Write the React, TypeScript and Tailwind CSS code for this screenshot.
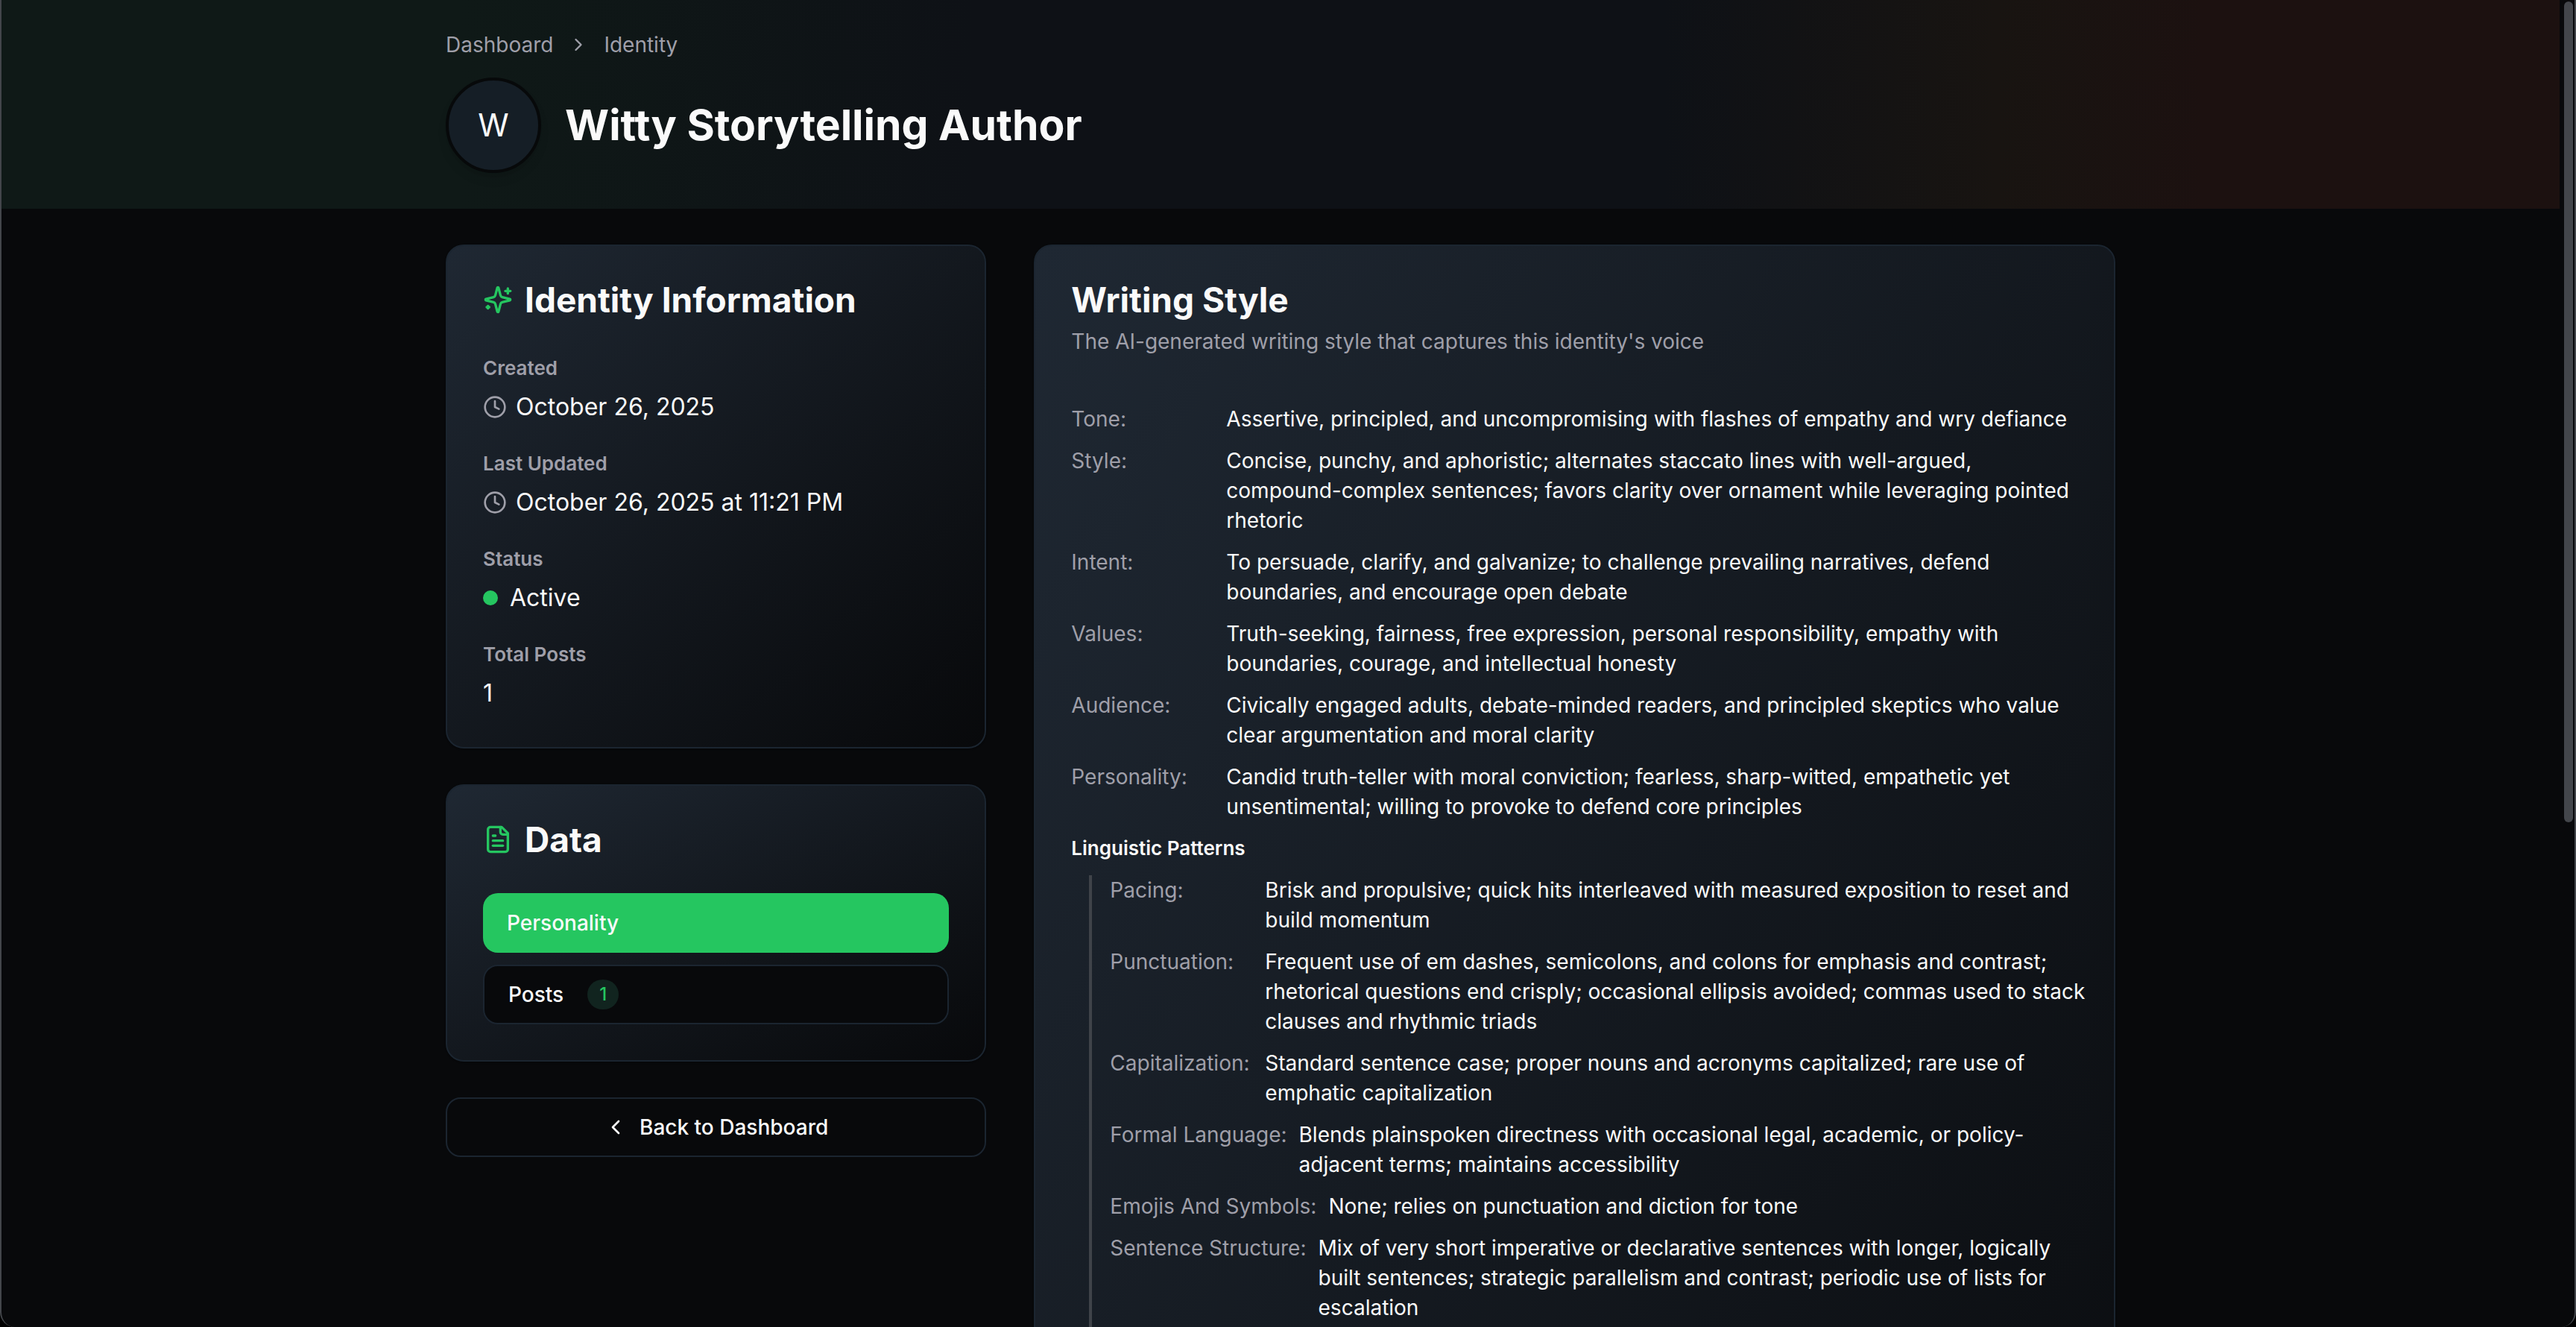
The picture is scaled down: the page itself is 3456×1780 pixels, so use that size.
/**
 * Identity Details Page
 *
 * Shows a single writing identity with:
 * - Header: breadcrumb, avatar and name
 * - Left: identity information, data tabs, link back to the dashboard
 * - Right: the generated writing style as labelled rows
 */

import React, { useState } from 'react'
import { ChevronLeft, ChevronRight, Clock } from 'lucide-react'
import { clsx } from 'clsx'

interface StyleEntry {
  label: string
  value: string
}

// Line breaks in the values are kept when the rows are drawn
const GENERAL: StyleEntry[] = [
  {
    label: 'Tone',
    value: 'Assertive, principled, and uncompromising with flashes of empathy and wry defiance',
  },
  {
    label: 'Style',
    value:
      'Concise, punchy, and aphoristic; alternates staccato lines with well-argued,\ncompound-complex sentences; favors clarity over ornament while leveraging pointed\nrhetoric',
  },
  {
    label: 'Intent',
    value:
      'To persuade, clarify, and galvanize; to challenge prevailing narratives, defend\nboundaries, and encourage open debate',
  },
  {
    label: 'Values',
    value:
      'Truth-seeking, fairness, free expression, personal responsibility, empathy with\nboundaries, courage, and intellectual honesty',
  },
  {
    label: 'Audience',
    value:
      'Civically engaged adults, debate-minded readers, and principled skeptics who value\nclear argumentation and moral clarity',
  },
  {
    label: 'Personality',
    value:
      'Candid truth-teller with moral conviction; fearless, sharp-witted, empathetic yet\nunsentimental; willing to provoke to defend core principles',
  },
]

const LINGUISTIC: StyleEntry[] = [
  {
    label: 'Pacing',
    value: 'Brisk and propulsive; quick hits interleaved with measured exposition to reset and\nbuild momentum',
  },
  {
    label: 'Punctuation',
    value:
      'Frequent use of em dashes, semicolons, and colons for emphasis and contrast;\nrhetorical questions end crisply; occasional ellipsis avoided; commas used to stack\nclauses and rhythmic triads',
  },
  {
    label: 'Capitalization',
    value: 'Standard sentence case; proper nouns and acronyms capitalized; rare use of\nemphatic capitalization',
  },
  {
    label: 'Formal Language',
    value:
      'Blends plainspoken directness with occasional legal, academic, or policy-\nadjacent terms; maintains accessibility',
  },
  {
    label: 'Emojis And Symbols',
    value: 'None; relies on punctuation and diction for tone',
  },
  {
    label: 'Sentence Structure',
    value:
      'Mix of very short imperative or declarative sentences with longer, logically\nbuilt sentences; strategic parallelism and contrast; periodic use of lists for\nescalation',
  },
]

const SparklesIcon: React.FC<{ className?: string }> = ({ className }) => (
  <svg
    viewBox="0 0 24 24"
    fill="none"
    stroke="currentColor"
    strokeWidth="2"
    strokeLinecap="round"
    strokeLinejoin="round"
    className={className}
    aria-hidden="true"
  >
    <path d="M9.937 15.5A2 2 0 0 0 8.5 14.063l-6.135-1.582a.5.5 0 0 1 0-.962L8.5 9.936A2 2 0 0 0 9.937 8.5l1.582-6.135a.5.5 0 0 1 .963 0L14.063 8.5A2 2 0 0 0 15.5 9.937l6.135 1.581a.5.5 0 0 1 0 .964L15.5 14.063a2 2 0 0 0-1.437 1.437l-1.582 6.135a.5.5 0 0 1-.963 0z" />
    <path d="M20 3v4" />
    <path d="M22 5h-4" />
    <path d="M4 17v2" />
    <path d="M5 18H3" />
  </svg>
)

const FileIcon: React.FC<{ className?: string }> = ({ className }) => (
  <svg
    viewBox="0 0 24 24"
    fill="none"
    stroke="currentColor"
    strokeWidth="2"
    strokeLinecap="round"
    strokeLinejoin="round"
    className={className}
    aria-hidden="true"
  >
    <path d="M15 2H6a2 2 0 0 0-2 2v16a2 2 0 0 0 2 2h12a2 2 0 0 0 2-2V7Z" />
    <path d="M14 2v4a2 2 0 0 0 2 2h4" />
    <path d="M10 9H8" />
    <path d="M16 13H8" />
    <path d="M16 17H8" />
  </svg>
)

const Card: React.FC<{ className?: string; children: React.ReactNode }> = ({ className, children }) => (
  <section
    className={clsx(
      'rounded-3xl border-2 border-[#1b2530] bg-linear-to-br from-[#1f2833] to-[#08090b] p-12 shadow-sm',
      className
    )}
  >
    {children}
  </section>
)

const InfoBlock: React.FC<{ label: string; children: React.ReactNode }> = ({ label, children }) => (
  <div className="flex flex-col gap-2">
    <h3 className="text-[26px] leading-10 font-semibold text-zinc-400">{label}</h3>
    <div className="flex items-center text-[32px] leading-12">{children}</div>
  </div>
)

const StyleRow: React.FC<{ entry: StyleEntry }> = ({ entry }) => (
  <div className="flex gap-4">
    <dt className="min-w-48 shrink-0 text-zinc-400">{entry.label}:</dt>
    <dd className="whitespace-pre-line">{entry.value}</dd>
  </div>
)

export default function App() {
  const [tab, setTab] = useState('personality')

  const tabClass = (name: string) =>
    clsx(
      'flex h-20 items-center gap-8 rounded-[20px] px-8 text-[28px] leading-10 font-medium',
      tab === name ? 'bg-[#25c660]' : 'border-2 border-[#1b2530] bg-[#08090b]'
    )

  return (
    <div className="h-screen bg-black font-['Inter',sans-serif] text-zinc-50">
      <div className="flex h-full overflow-hidden rounded-b-[20px] border-x-2 border-[#43464b] bg-[#08090b]">
        <div className="h-full min-w-0 flex-1 overflow-hidden">
          {/* Header */}
          <header className="bg-[linear-gradient(to_right,#0f1917_18%,#0e1116_38%,#0e1116_65%,#181411_78%,#1c1110_86%)] pt-10 pb-12">
            <div className="mx-auto flex max-w-[2240px] flex-col gap-6">
              <nav aria-label="Breadcrumb" className="flex items-center gap-5 text-[28px] leading-10 text-zinc-400">
                <a href="#dashboard">Dashboard</a>
                <ChevronRight className="size-7" />
                <span>Identity</span>
              </nav>
              <div className="flex items-center gap-8">
                <div className="flex size-32 items-center justify-center rounded-full border-4 border-[#07090a] bg-[#151e26] text-[42px] leading-14 shadow-lg">
                  W
                </div>
                <h1 className="text-[57px] leading-[72px] font-bold">Witty Storytelling Author</h1>
              </div>
            </div>
          </header>

          <main className="mx-auto grid max-w-[2240px] grid-cols-[1fr_2fr] gap-16 pt-12">
            {/* Left column */}
            <div className="flex flex-col gap-12">
              <Card className="flex flex-col gap-12">
                <h2 className="flex items-center gap-4 text-[46px] leading-12 font-bold">
                  <SparklesIcon className="size-10 text-[#25c660]" />
                  Identity Information
                </h2>
                <div className="flex flex-col gap-8">
                  <InfoBlock label="Created">
                    <Clock className="mr-3 size-8 text-zinc-400" />
                    October 26, 2025
                  </InfoBlock>
                  <InfoBlock label="Last Updated">
                    <Clock className="mr-3 size-8 text-zinc-400" />
                    October 26, 2025 at 11:21 PM
                  </InfoBlock>
                  <InfoBlock label="Status">
                    <span className="mr-4 size-5 rounded-full bg-[#25c660]" />
                    Active
                  </InfoBlock>
                  <InfoBlock label="Total Posts">1</InfoBlock>
                </div>
              </Card>

              <Card className="flex flex-col gap-12">
                <h2 className="flex items-center gap-4 text-[46px] leading-12 font-bold">
                  <FileIcon className="size-10 text-[#25c660]" />
                  Data
                </h2>
                <div className="flex flex-col gap-4">
                  <button type="button" className={tabClass('personality')} onClick={() => setTab('personality')}>
                    Personality
                  </button>
                  <button type="button" className={tabClass('posts')} onClick={() => setTab('posts')}>
                    Posts
                    <span className="rounded-full bg-[#11241f] px-4 py-1 text-[24px] leading-8 text-[#25c660]">1</span>
                  </button>
                </div>
              </Card>

              <a
                href="#dashboard"
                className="flex h-20 items-center justify-center gap-4 rounded-[20px] border-2 border-[#1b2530] text-[28px] leading-10 font-medium"
              >
                <ChevronLeft className="size-8" />
                Back to Dashboard
              </a>
            </div>

            {/* Right column */}
            <Card className="min-h-[2500px] pr-8">
              <h2 className="text-[46px] leading-12 font-bold">Writing Style</h2>
              <p className="mt-3 text-[28px] leading-10 text-zinc-400">
                The AI-generated writing style that captures this identity's voice
              </p>
              <div className="mt-16 flex flex-col gap-4 text-[28px] leading-10">
                <dl className="flex flex-col gap-4">
                  {GENERAL.map((entry) => (
                    <StyleRow key={entry.label} entry={entry} />
                  ))}
                </dl>
                <h3 className="text-[26px] leading-10 font-semibold">Linguistic Patterns</h3>
                <dl className="ml-6 flex flex-col gap-4 border-l-4 border-[#3f4349] pb-16 pl-6">
                  {LINGUISTIC.map((entry) => (
                    <StyleRow key={entry.label} entry={entry} />
                  ))}
                </dl>
              </div>
            </Card>
          </main>
        </div>

        {/* Scroll track */}
        <div className="w-5 shrink-0 py-0.5 pl-1.5">
          <div className="h-[62%] w-3 rounded-full bg-[#43464b]" />
        </div>
      </div>
    </div>
  )
}
